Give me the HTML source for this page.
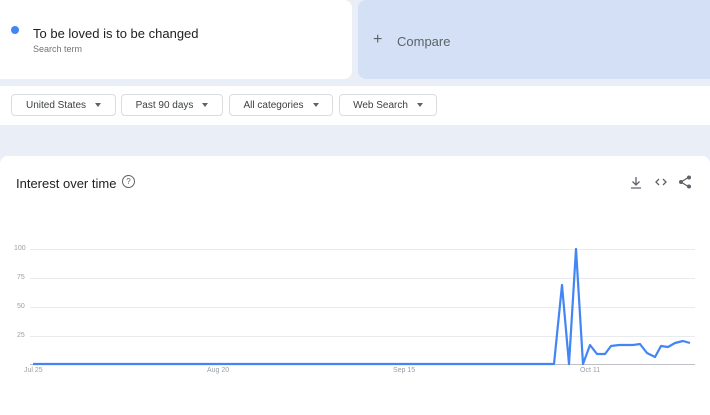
<!DOCTYPE html>
<html><head><style>
body{margin:0;width:710px;height:415px;background:#eaeff7;font-family:"Liberation Sans",sans-serif;position:relative;overflow:hidden}
.a{position:absolute}
.chip{position:absolute;top:94px;height:22px;border:1px solid #dadce0;border-radius:4px;background:#fff;font-size:10px;color:#3c4043;display:flex;align-items:center;justify-content:center;box-sizing:border-box}
.chip i{display:inline-block;width:0;height:0;border-left:3.5px solid transparent;border-right:3.5px solid transparent;border-top:4px solid #5f6368;margin-left:9px}
.yl{position:absolute;left:14px;font-size:7px;color:#9aa0a6}
</style></head><body>
<div class="a" style="left:0;top:0;width:352px;height:79px;background:#fff;border-radius:0 8px 8px 0"></div>
<div class="a" style="left:11px;top:26px;width:8px;height:8px;border-radius:50%;background:#4285f4"></div>
<div class="a" style="left:33px;top:26px;font-size:13px;color:#202124">To be loved is to be changed</div>
<div class="a" style="left:33px;top:44px;font-size:9px;color:#70757a">Search term</div>
<div class="a" style="left:358px;top:0;width:352px;height:79px;background:#d3e0f5;border-radius:8px 0 0 8px"></div>
<div class="a" style="left:373px;top:31px;font-size:16px;color:#5f6368;line-height:18px">+</div>
<div class="a" style="left:397px;top:34px;font-size:13px;color:#5f6368">Compare</div>
<div class="a" style="left:0;top:86px;width:710px;height:39px;background:#fff"></div>
<div class="chip" style="left:11px;width:105px">United States<i></i></div>
<div class="chip" style="left:121px;width:102px">Past 90 days<i></i></div>
<div class="chip" style="left:229px;width:104px">All categories<i></i></div>
<div class="chip" style="left:339px;width:98px">Web Search<i></i></div>
<div class="a" style="left:0;top:156px;width:710px;height:259px;background:#fff;border-radius:8px 8px 0 0"></div>
<div class="a" style="left:16px;top:176px;font-size:13px;color:#202124">Interest over time</div>
<div class="a" style="left:122px;top:175px;width:11px;height:11px;border:1.2px solid #5f6368;border-radius:50%;font-size:8px;color:#5f6368;text-align:center;line-height:11px">?</div>
<svg class="a" style="left:0;top:0" width="710" height="415">
<g stroke="#5f6368" stroke-width="1.3" fill="none">
<path d="M636 177v8M632.5 181.5l3.5 3.5 3.5-3.5M631 188h10"/>
<path d="M659 179l-3 3 3 3M663 179l3 3-3 3"/>
<path d="M689 177l-8 5 8 5"/>
</g>
<g fill="#5f6368"><circle cx="689" cy="177.5" r="2"/><circle cx="681" cy="182" r="2"/><circle cx="689" cy="186.5" r="2"/></g>
<g stroke="#e8eaed" stroke-width="1"><path d="M30 249.5H695M30 278.5H695M30 307.5H695M30 336.5H695"/></g>
<path d="M30 364.5H695" stroke="#bdc1c6"/>
<polyline fill="none" stroke="#4285f4" stroke-width="2.2" stroke-linejoin="round" points="33,364 554,364 562,285 569,364 576,249 583,364 590,345 597,354 605,354 611,346 619,345 633,345 640,344 647,353 655,357 661,346 668,347 675,343 683,341 690,343"/>
</svg>
<div class="yl" style="top:245px">100</div>
<div class="yl" style="top:274px;left:17px">75</div>
<div class="yl" style="top:303px;left:17px">50</div>
<div class="yl" style="top:332px;left:17px">25</div>
<div class="a" style="left:24px;top:367px;font-size:7px;color:#9aa0a6">Jul 25</div>
<div class="a" style="left:207px;top:367px;font-size:7px;color:#9aa0a6">Aug 20</div>
<div class="a" style="left:393px;top:367px;font-size:7px;color:#9aa0a6">Sep 15</div>
<div class="a" style="left:580px;top:367px;font-size:7px;color:#9aa0a6">Oct 11</div>
</body></html>
